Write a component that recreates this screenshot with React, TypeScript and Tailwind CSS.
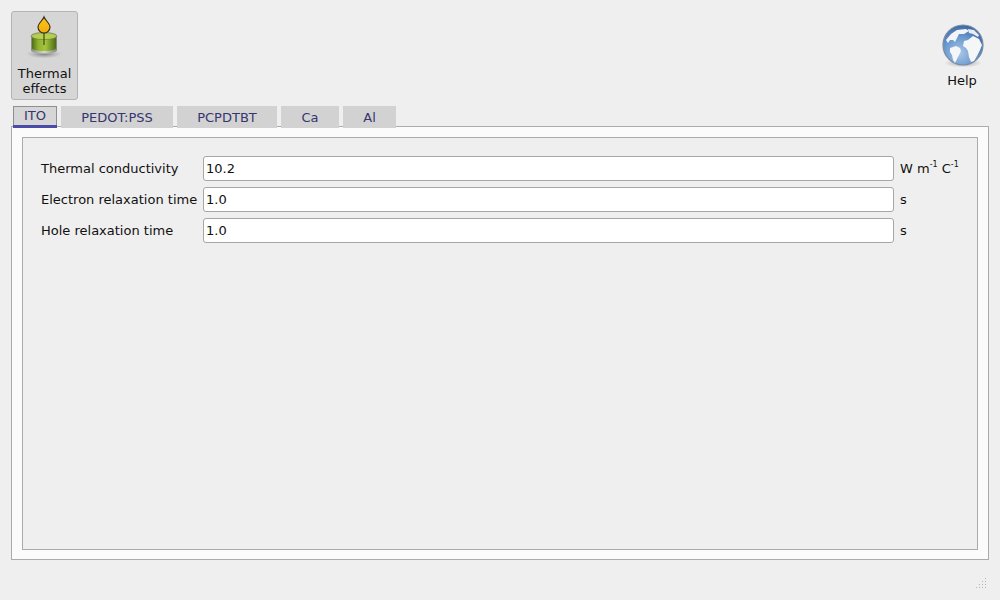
import React from 'react';

const font = { fontFamily: '"DejaVu Sans", sans-serif' };

function CandleIcon() {
  return (
    <svg width="40" height="48" viewBox="0 0 40 48">
      <defs>
        <linearGradient id="glass" x1="0" x2="1" y1="0" y2="0">
          <stop offset="0" stopColor="#4f6d18" />
          <stop offset="0.25" stopColor="#8fb02f" />
          <stop offset="0.55" stopColor="#a6c63f" />
          <stop offset="1" stopColor="#4c6a16" />
        </linearGradient>
        <linearGradient id="rim" x1="0" x2="1" y1="0" y2="0">
          <stop offset="0" stopColor="#8a8f80" />
          <stop offset="0.5" stopColor="#d4d8ca" />
          <stop offset="1" stopColor="#82877a" />
        </linearGradient>
        <radialGradient id="shade">
          <stop offset="0" stopColor="#444" stopOpacity="0.6" />
          <stop offset="1" stopColor="#777" stopOpacity="0" />
        </radialGradient>
        <linearGradient id="flame" x1="0" x2="0" y1="0" y2="1">
          <stop offset="0" stopColor="#f9c81c" />
          <stop offset="1" stopColor="#f5aa0e" />
        </linearGradient>
      </defs>
      <ellipse cx="20" cy="40" rx="18" ry="4.5" fill="url(#shade)" />
      <path d="M7 22h26v14c0 2-5 3.500-13 3.500S7 38 7 36z" fill="url(#rim)" />
      <path d="M8 23h24v11c0 2-5 3-12 3S8 36 8 34z" fill="url(#glass)" />
      <ellipse cx="20" cy="22" rx="13" ry="3.500" fill="#aebf6c" stroke="#6d7f38" strokeWidth="0.7" />
      <ellipse cx="20" cy="22.500" rx="11" ry="2.400" fill="#b4d14a" />
      <path d="M20 16v15" stroke="#3f4a14" strokeWidth="1.200" />
      <path d="M20 3c1 3 6 6.500 6 10 0 3.500-3 6-6 6s-6-2.500-6-6C14 9.500 19 6 20 3z" fill="url(#flame)" stroke="#2d2608" strokeWidth="1.100" />
    </svg>
  );
}

function GlobeIcon() {
  return (
    <svg width="44" height="48" viewBox="0 0 44 48">
      <defs>
        <radialGradient id="sea" cx="0.42" cy="0.7" r="0.75">
          <stop offset="0" stopColor="#a9c6e6" />
          <stop offset="0.55" stopColor="#6697cd" />
          <stop offset="1" stopColor="#355f9e" />
        </radialGradient>
        <radialGradient id="shadow">
          <stop offset="0" stopColor="#555" stopOpacity="0.55" />
          <stop offset="1" stopColor="#777" stopOpacity="0" />
        </radialGradient>
      </defs>
      <ellipse cx="22" cy="40" rx="19" ry="4.500" fill="url(#shadow)" />
      <circle cx="22" cy="22" r="20" fill="url(#sea)" stroke="#7c8aa3" strokeWidth="1.200" />
      <path d="M5 17l5-6 6-4 9-1 3 2-5 3-5 0-2 4-2 4-2-2-3 0-2 3z" fill="#f3f4f6" />
      <path d="M9 25l6-2 4 2 1 3-3 6-3 6-2-3-1-5-2-3z" fill="#f5f6f7" />
      <path d="M23 18l4-1 5-4 6 3 3 6-2 5-3 6-3 5-3 1-2-5-1-6-2-3-3-2z" fill="#f5f6f7" />
      <path d="M27 6l6 1 5 5-1 2-5-3-4-1z" fill="#e9edf3" />
    </svg>
  );
}

function Tab({ label, active, width }: { label: string; active?: boolean; width: string }) {
  if (active) {
    return (
      <div className={`${width} h-[22px] border border-[#8f8f8f] border-b-0 bg-[#d6d6d6] text-center text-[#35356f] leading-[18px] relative`}>
        {label}
        <div className="absolute left-[-1px] right-[-1px] bottom-0 h-[3px] bg-[#4c4ca8]" />
      </div>
    );
  }
  return (
    <div className={`${width} h-[22px] bg-[#d2d2d2] text-center text-[#35356f] leading-[24px]`}>{label}</div>
  );
}

function Row({ label, value, unit }: { label: string; value: string; unit: React.ReactNode }) {
  return (
    <div className="flex items-center h-[25px]">
      <div className="w-[162px] whitespace-nowrap text-[#111]">{label}</div>
      <div className="w-[691px] h-[25px] rounded-[3px] border border-[#a6a6a6] bg-white pl-[2px] leading-[23px] text-[#111]">{value}</div>
      <div className="ml-[6px] whitespace-nowrap text-[#111]">{unit}</div>
    </div>
  );
}

export default function App() {
  return (
    <div className="w-[1000px] h-[600px] bg-[#efefef] flex flex-col relative overflow-hidden text-[13px]" style={font}>
      <div className="flex justify-between h-[106px] pt-[11px] pl-[11px] pr-[11px]">
        <div className="w-[67px] h-[89px] rounded-[3px] border border-[#b4b4b4] bg-[#d6d6d6] flex flex-col items-center">
          <div className="h-[48px] mt-[2px] mr-[2px]"><CandleIcon /></div>
          <div className="text-center text-[#111] leading-[15px] mt-[4px]">Thermal<br />effects</div>
        </div>
        <div className="w-[56px] flex flex-col items-center pt-[12px] ml-auto mr-[-1px]">
          <div className="h-[48px] ml-[2px]"><GlobeIcon /></div>
          <div className="text-[#111] leading-[15px] mt-[2px]">Help</div>
        </div>
      </div>
      <div className="flex gap-[4px] pl-[13px] h-[22px] relative z-10">
        <Tab label="ITO" active width="w-[44px]" />
        <Tab label="PEDOT:PSS" width="w-[112px]" />
        <Tab label="PCPDTBT" width="w-[100px]" />
        <Tab label="Ca" width="w-[58px]" />
        <Tab label="Al" width="w-[53px]" />
      </div>
      <div className="mx-[11px] mt-[-2px] h-[434px] border border-[#ababab] bg-[#fbfbfb] p-[10px]">
        <div className="h-[413px] border border-[#ababab] bg-[#efefef] pt-[18px] pl-[18px] flex flex-col gap-[6px]">
          <Row label="Thermal conductivity" value="10.2" unit={<span>W m<sup className="text-[8px] align-[2px] leading-none">-1</sup> C<sup className="text-[8px] align-[2px] leading-none">-1</sup></span>} />
          <Row label="Electron relaxation time" value="1.0" unit="s" />
          <Row label="Hole relaxation time" value="1.0" unit="s" />
        </div>
      </div>
      <svg className="absolute right-[12px] bottom-[11px]" width="12" height="12" viewBox="0 0 12 12">
        {[[9, 1], [6, 4], [9, 4], [3, 7], [6, 7], [9, 7], [0, 10], [3, 10], [6, 10], [9, 10]].map(([x, y], i) => (
          <rect key={i} x={x} y={y} width="1" height="1" fill="#b5b5b5" />
        ))}
      </svg>
    </div>
  );
}
